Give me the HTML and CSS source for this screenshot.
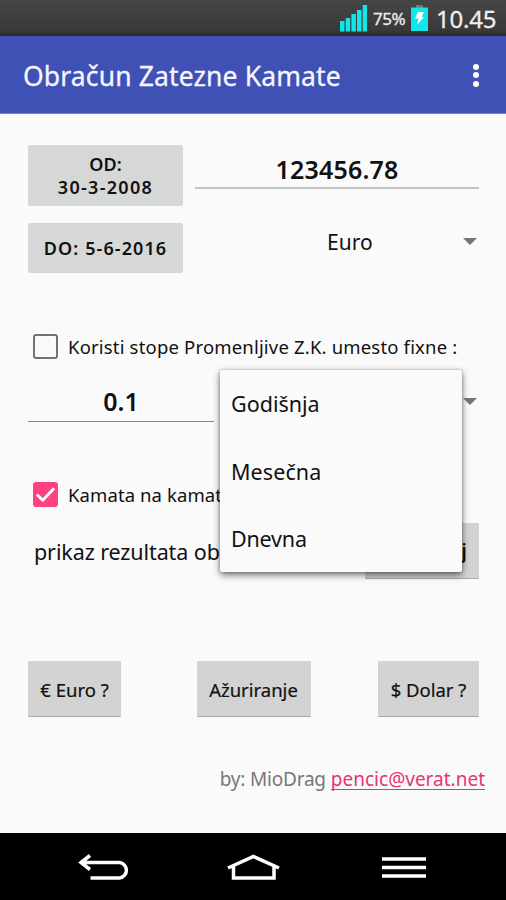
FILE: index.html
```html
<!DOCTYPE html>
<html lang="sr-Latn">
<head>
<meta charset="utf-8">
<title>Obračun Zatezne Kamate</title>
<link rel="stylesheet" href="styles.css">
</head>
<body>
<div class="status">
  <svg class="signal" width="28" height="28" viewBox="0 0 28 28"><path fill="#12e6e8" d="M0 17h4.500v10.500H0zM5.700 14h4.500v13.500H5.700zM11.400 10h4.500v17.500h-4.500zM17 6h4.500v21.500H17zM22.700 1H27v26.500h-4.300z"/></svg>
  <span class="percent">75%</span>
  <svg class="battery" width="17" height="26" viewBox="0 0 17 26"><path fill="#777" d="M5 0h7v3H5z"/><path fill="#12e6e8" d="M0 2.500h17V26H0z"/><path fill="#fff" d="M7 7h6l-2.500 5H13l-7 8 1.500-6.500H4z"/></svg>
  <span class="clock">10.45</span>
</div>
<header class="appbar">
  <h1><span class="title">Obračun Zatezne Kamate</span></h1>
  <div class="more"><i></i><i></i><i></i></div>
</header>
<main>
  <div class="row amounts">
    <button class="btn from">OD:<br><span class="date">30-3-2008</span></button>
    <div class="field amount">123456.78</div>
  </div>
  <div class="row currency">
    <button class="btn to">DO: 5-6-2016</button>
    <div class="select"><span class="euro">Euro</span><i class="caret"></i></div>
  </div>
  <label class="row check first"><span class="box"></span><span class="variable">Koristi stope Promenljive Z.K. umesto fixne :</span></label>
  <div class="row rate">
    <div class="field percentage">0.1</div>
    <div class="period"><i class="caret"></i>
      <ul class="menu"><li class="yearly">Godišnja</li><li class="monthly">Mesečna</li><li class="daily">Dnevna</li></ul>
    </div>
  </div>
  <label class="row check second"><span class="box checked"><svg width="26" height="26" viewBox="0 0 26 26"><path d="M4 13l6.200 6L22 6.500" fill="none" stroke="#fff" stroke-width="3"/></svg></span><span class="compound">Kamata na kamat</span></label>
  <div class="row result"><span class="display">prikaz rezultata ob</span><button class="btn flat calc">j</button></div>
  <div class="row links">
    <button class="btn flat e"><span>€ Euro ?</span></button>
    <button class="btn flat a"><span>Ažuriranje</span></button>
    <button class="btn flat d"><span>$ Dolar ?</span></button>
  </div>
  <footer><span class="by">by: MioDrag</span> <a class="mail">pencic@verat.net</a></footer>
</main>
<nav>
  <svg width="506" height="66" viewBox="0 0 506 66" fill="none" stroke="#fff" stroke-width="3.500">
    <path d="M90 22.500L81 29.500L90 36.500M81 29.500h38.500a7.800 7.800 0 0 1 0 15.500H90.500"/>
    <path d="M228 35L253.500 23.500L279 35M233.500 33v12h40.500V33"/>
    <path d="M382 26h44M382 34.500h44M382 43h44"/>
  </svg>
</nav>
</body>
</html>
```
FILE: styles.css
```css
* { box-sizing: border-box; }
body { margin: 0; width: 506px; height: 900px; display: flex; flex-direction: column; overflow: hidden; background: #fafafa; color: #111; font-family: "Noto Sans", sans-serif; }
span, li, a, .field { white-space: nowrap; }
i { display: block; }
.status { height: 36px; flex: none; display: flex; align-items: flex-start; justify-content: flex-end; padding: 4px 9px 0 0; color: #eee; background: linear-gradient(#464646, #393939 85%, #292929); }
.percent { font-size: 17px; line-height: 29px; margin-left: 5px; width: 33px; letter-spacing: -.5px; -webkit-text-stroke: .3px #eee; }
.battery { margin: 1px 0 0 5px; }
.clock { font-size: 24px; line-height: 30px; margin-left: 8px; width: 61px; letter-spacing: -.2px; -webkit-text-stroke: .3px #eee; }
.appbar { height: 78px; flex: none; padding: 0 27px 0 23px; display: flex; align-items: center; justify-content: space-between; color: #f4f5ff; background: #3f51b5; border-bottom: 1px solid #7581c4; }
h1 { margin: 2px 0 0; font-size: 26.500px; line-height: 36px; font-weight: 400; letter-spacing: .13px; -webkit-text-stroke: .3px #f4f5ff; }
.more { display: grid; gap: 2.500px; margin-top: 1px; }
.more i { width: 6px; height: 6px; border-radius: 50%; background: #fff; }
main { height: 719px; flex: none; padding: 31px 27px 0 28px; }
.row { display: flex; }
.btn { border: 0; padding: 0; background: #d6d8d7; color: #111; font: 600 18px/23px "Noto Sans", sans-serif; border-radius: 2px; }
.from { width: 155px; height: 61px; padding-top: 1px; }
.date { letter-spacing: 1.300px; }
.to { width: 155px; height: 50px; margin-top: -1px; padding-top: 1px; letter-spacing: 1.100px; }
.field { font-weight: 600; font-size: 25px; text-align: center; }
.amounts { height: 79px; gap: 12px; }
.amount { width: 284px; height: 44px; line-height: 48px; border-bottom: 2px solid #c4c4c4; letter-spacing: .2px; }
.currency { height: 110px; }
.select { flex: 1; height: 36px; display: flex; align-items: center; padding: 0 2px 0 144px; justify-content: space-between; }
.euro { font-size: 21px; }
.caret { border: 7px solid transparent; border-top: 7px solid #757575; border-bottom: 0; }
.select .caret { margin-top: -2px; }
.check { align-items: center; height: 34px; padding-left: 5px; gap: 9px; font-size: 18.500px; }
.variable { letter-spacing: .18px; margin-top: 1px; }
.compound { margin-top: 1px; letter-spacing: .1px; }
.box { width: 25px; height: 25px; flex: none; border: 2px solid #737373; border-radius: 3px; margin-right: 1px; }
.checked { border: 0; background: #ff4081; }
.checked svg { display: block; width: 25px; height: 25px; }
.first { margin-top: -5px; }
.rate { height: 114px; padding-top: 15px; justify-content: space-between; }
.percentage { width: 186px; height: 44px; line-height: 47px; border-bottom: 1px solid #858585; }
.period { width: 259px; display: flex; justify-content: flex-end; position: relative; padding: 20px 2px 0 0; }
.menu { position: absolute; left: 0; top: -8px; width: 242px; height: 202px; margin: 0; padding: 0; list-style: none; background: #fafafa; border-radius: 2px; box-shadow: 0 3px 7px rgba(0,0,0,.55), 0 0 3px rgba(0,0,0,.25); z-index: 2; }
.menu li { height: 67.500px; line-height: 68px; padding-left: 11px; font-size: 21.500px; }
.monthly { letter-spacing: .1px; }
.daily { letter-spacing: -.2px; }
.result { height: 150px; padding: 12px 0 0 6px; justify-content: space-between; }
.display { font-size: 21.500px; line-height: 57px; letter-spacing: -.1px; }
.flat { background: #d3d3d3; border-radius: 1px; height: 56px; border-bottom: 1px solid #a9a9a9; }
.calc { width: 114px; font-size: 20px; text-align: right; padding-right: 12px; }
.links { justify-content: space-between; }
.links .btn { font-weight: 400; font-size: 18.500px; padding-top: 2px; -webkit-text-stroke: .2px #111; }
.e { width: 93px; }
.a { width: 114px; margin-right: -8px; }
.d { width: 101px; }
footer { margin: 48px -6px 0 0; display: flex; justify-content: flex-end; gap: 5px; font-size: 19px; line-height: 28px; color: #777; }
.by { letter-spacing: -.2px; }
.mail { color: #e83278; text-decoration: underline; text-decoration-skip-ink: none; text-underline-offset: 3px; }
nav { height: 67px; flex: none; background: #000; }
nav svg { display: block; }
```
